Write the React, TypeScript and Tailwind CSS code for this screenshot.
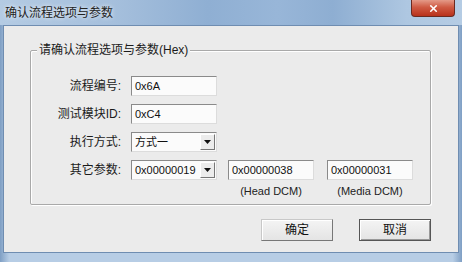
import React from 'react';
import { X } from 'lucide-react';

const cjk = "font-['Liberation_Sans','Noto_Sans_CJK_SC',sans-serif]";

const Field: React.FC<{ value: string }> = ({ value }) => (
  <div className="w-[86px] h-[20px] bg-[#fbfbfb] border border-[#8a8a8a] border-r-[#dcdcdc] border-b-[#dcdcdc] flex items-center px-[3px] text-[11px] text-[#111]">
    {value}
  </div>
);

const Combo: React.FC<{ value: string }> = ({ value }) => (
  <div className="w-[86px] h-[20px] bg-[#fbfbfb] border border-[#8a8a8a] border-r-[#dcdcdc] border-b-[#dcdcdc] flex items-center pl-[3px] pr-[1px] text-[11px] text-[#111]">
    <span className="flex-1 whitespace-nowrap">{value}</span>
    <div className="w-[15px] h-[16px] bg-[#ececec] border border-[#fff] border-r-[#777] border-b-[#777] flex items-center justify-center">
      <svg width="7" height="4" viewBox="0 0 7 4"><path d="M0 0h7L3.5 4z" fill="#111" /></svg>
    </div>
  </div>
);

const Row: React.FC<{ label: string; children: React.ReactNode }> = ({ label, children }) => (
  <div className="flex items-center h-[20px]">
    <div className="w-[90px] text-right text-[12px] text-[#1a1a1a]">{label}</div>
    <div className="ml-[10px] flex items-center">{children}</div>
  </div>
);

const Btn: React.FC<{ label: string; dark?: boolean }> = ({ label, dark }) => (
  <div
    className={
      "w-[72px] h-[22px] flex items-center justify-center text-[12px] text-[#111] bg-[linear-gradient(#f4f4f4,#e4e4e4)] border " +
      (dark
        ? "border-[#555] shadow-[inset_1px_1px_0_#fff,inset_-1px_-1px_0_#999]"
        : "border-[#c8c8c8] border-r-[#777] border-b-[#777] shadow-[inset_1px_1px_0_#fff]")
    }
  >
    {label}
  </div>
);

export default function App() {
  return (
    <div className={"w-[462px] h-[262px] flex flex-col bg-[#a9c2dd] " + cjk}>
      {/* title bar */}
      <div className="h-[25px] flex items-start bg-[linear-gradient(90deg,#b4cbe3_0%,#a5bfdc_25%,#8fafd3_45%,#98b6d8_60%,#8eaed2_72%,#aec7e1_88%,#b5cce4_100%)]">
        <div className="pl-[5px] pt-[4px] text-[12px] text-[#222] [text-shadow:0_0_4px_#fff]">确认流程选项与参数</div>
        <div className="ml-auto mr-[7px] w-[44px] h-[17px] rounded-b-[4px] border border-t-0 border-[#6b2a20] bg-[linear-gradient(#e49a88,#cf5a43_45%,#b8321c)] flex items-center justify-center">
          <X size={11} strokeWidth={3.5} color="#fff" />
        </div>
      </div>

      {/* frame + client */}
      <div className="flex-1 flex px-[3px] pb-[9px] bg-[linear-gradient(90deg,#7f9fc4,#b7cde5_2%,#b7cde5_98%,#7f9fc4)]">
        <div className="flex-1 bg-[#ebebeb] border border-[#6f8db1] flex flex-col pl-[26px] pr-[27px] pt-[24px]">
          {/* group box */}
          <div className="relative h-[155px] border border-[#a9a9a9] shadow-[inset_1px_1px_0_#fff,1px_1px_0_#fff] rounded-[2px] pt-[25px] flex flex-col">
            <span className="absolute -top-[8px] left-[6px] px-[2px] bg-[#ebebeb] text-[12px] leading-[14px] text-[#1a1a1a]">
              请确认流程选项与参数(Hex)
            </span>
            <div className="flex flex-col gap-[8px]">
              <Row label="流程编号:"><Field value="0x6A" /></Row>
              <Row label="测试模块ID:"><Field value="0xC4" /></Row>
              <Row label="执行方式:"><Combo value="方式一" /></Row>
              <Row label="其它参数:">
                <Combo value="0x00000019" />
                <div className="ml-[11px]"><Field value="0x00000038" /></div>
                <div className="ml-[13px]"><Field value="0x00000031" /></div>
              </Row>
            </div>
            <div className="flex mt-[4px] text-[11px] text-[#222] leading-[14px]">
              <div className="ml-[197px] w-[86px] text-center">(Head DCM)</div>
              <div className="ml-[13px] w-[86px] text-center">(Media DCM)</div>
            </div>
          </div>

          <div className="flex justify-end gap-[26px] mt-[14px] pr-[0px]">
            <Btn label="确定" />
            <Btn label="取消" dark />
          </div>
        </div>
      </div>
    </div>
  );
}
